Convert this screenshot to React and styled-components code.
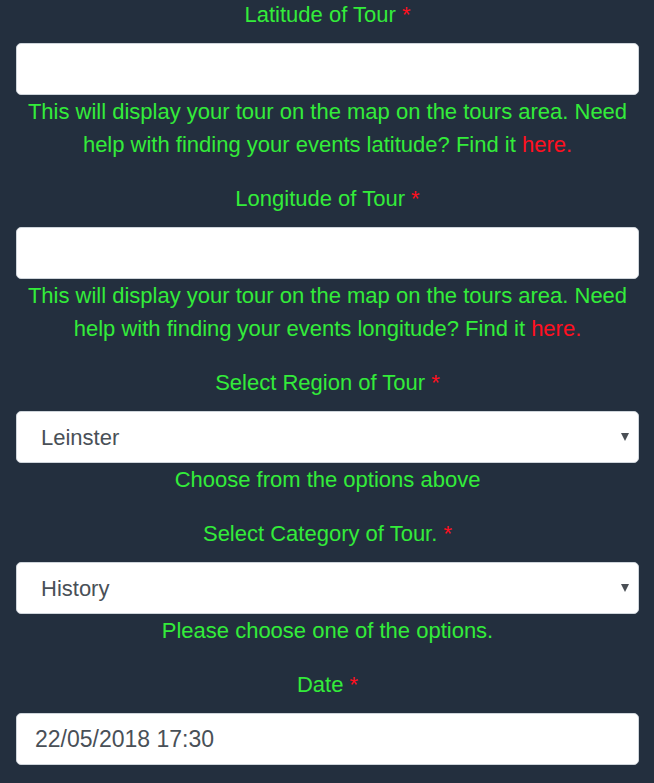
import styled, { createGlobalStyle } from "styled-components";

const GlobalStyle = createGlobalStyle`
  html, body {
    margin: 0;
    padding: 0;
    background: #232f3e;
  }
  * {
    box-sizing: border-box;
  }
`;

const Form = styled.form`
  padding: 1px 15px 0 16px;
  font-family: "Liberation Sans", Arial, sans-serif;
  text-align: center;
`;

const Group = styled.div`
  display: flex;
  flex-direction: column;
  margin-bottom: 24px;
`;

const Label = styled.label`
  display: block;
  font-size: 22px;
  line-height: 28px;
  color: #33ec3a;
  margin-bottom: 14px;
`;

const Required = styled.span`
  color: #ff1020;
`;

const Field = styled.input`
  display: block;
  width: 100%;
  height: 52px;
  padding: 0 18px;
  font-family: inherit;
  font-size: ${(p) => p.$size || "22px"};
  color: #495057;
  background: #ffffff;
  border: 1px solid #ced4da;
  border-radius: 5px;
  outline: none;
`;

const SelectWrap = styled.div`
  position: relative;
`;

const Select = styled.select`
  display: block;
  width: 100%;
  height: 52px;
  padding: 0 24px;
  font-family: inherit;
  font-size: 22px;
  color: #495057;
  background: #ffffff;
  border: 1px solid #ced4da;
  border-radius: 5px;
  appearance: none;
  outline: none;
`;

const Caret = styled.span`
  position: absolute;
  right: 10px;
  top: 50%;
  transform: translateY(-50%);
  width: 0;
  height: 0;
  border-left: 4px solid transparent;
  border-right: 4px solid transparent;
  border-top: 8px solid #4a4f55;
  pointer-events: none;
`;

const Help = styled.p`
  margin: 0;
  font-size: 22px;
  line-height: 33px;
  color: #33ec3a;
`;

const HelpLink = styled.a`
  color: #ff1020;
  text-decoration: none;
`;

const App = () => (
  <>
    <GlobalStyle />
    <Form>
      <Group>
        <Label>
          Latitude of Tour <Required>*</Required>
        </Label>
        <Field type="text" />
        <Help>
          This will display your tour on the map on the tours area. Need help
          with finding your events latitude? Find it{" "}
          <HelpLink href="#">here.</HelpLink>
        </Help>
      </Group>

      <Group>
        <Label>
          Longitude of Tour <Required>*</Required>
        </Label>
        <Field type="text" />
        <Help>
          This will display your tour on the map on the tours area. Need help
          with finding your events longitude? Find it{" "}
          <HelpLink href="#">here.</HelpLink>
        </Help>
      </Group>

      <Group>
        <Label>
          Select Region of Tour <Required>*</Required>
        </Label>
        <SelectWrap>
          <Select defaultValue="Leinster">
            <option>Leinster</option>
            <option>Munster</option>
            <option>Connacht</option>
            <option>Ulster</option>
          </Select>
          <Caret />
        </SelectWrap>
        <Help>Choose from the options above</Help>
      </Group>

      <Group>
        <Label>
          Select Category of Tour. <Required>*</Required>
        </Label>
        <SelectWrap>
          <Select defaultValue="History">
            <option>History</option>
            <option>Nature</option>
            <option>Food</option>
          </Select>
          <Caret />
        </SelectWrap>
        <Help>Please choose one of the options.</Help>
      </Group>

      <Group>
        <Label>
          Date <Required>*</Required>
        </Label>
        <Field type="text" $size="23px" defaultValue="22/05/2018 17:30" />
      </Group>
    </Form>
  </>
);

export default App;
